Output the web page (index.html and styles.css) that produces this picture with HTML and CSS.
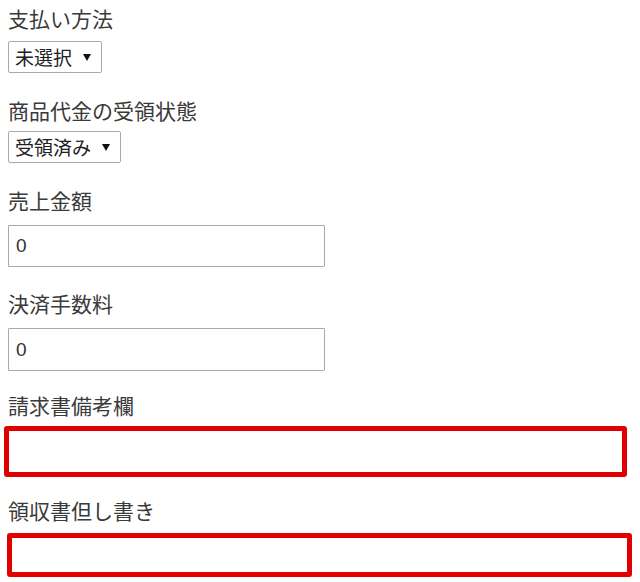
FILE: index.html
```html
<!DOCTYPE html>
<html lang="ja">
<head>
<meta charset="utf-8">
<link rel="stylesheet" href="styles.css">
</head>
<body>
<form class="form">
  <div class="field">
    <label class="label">支払い方法</label>
    <div class="select"><span class="select-text">未選択</span><svg class="arrow" width="8" height="7" viewBox="0 0 8 7"><path d="M0 0H8L4 7Z" fill="#111"/></svg></div>
  </div>
  <div class="field">
    <label class="label">商品代金の受領状態</label>
    <div class="select"><span class="select-text">受領済み</span><svg class="arrow" width="8" height="7" viewBox="0 0 8 7"><path d="M0 0H8L4 7Z" fill="#111"/></svg></div>
  </div>
  <div class="field field-input">
    <label class="label">売上金額</label>
    <input class="input" type="text" value="0">
  </div>
  <div class="field field-input">
    <label class="label">決済手数料</label>
    <input class="input input-tall" type="text" value="0">
  </div>
  <div class="field field-red1">
    <label class="label">請求書備考欄</label>
    <input class="input-red red1" type="text">
  </div>
  <div class="field field-red2">
    <label class="label">領収書但し書き</label>
    <input class="input-red red2" type="text">
  </div>
</form>
</body>
</html>
```

FILE: styles.css
```css
html, body {
  margin: 0;
  padding: 0;
  background: #fff;
}
body {
  font-family: "Noto Sans CJK JP", "Noto Sans", sans-serif;
  color: #333;
}
.form {
  display: flex;
  flex-direction: column;
  padding: 4px 0 0 0;
}
.field {
  display: flex;
  flex-direction: column;
  align-items: flex-start;
  padding-left: 8px;
}
.label {
  font-size: 21px;
  line-height: 28px;
  height: 28px;
  color: #3a3a3a;
}
.select {
  margin-top: 9px;
  margin-bottom: 23px;
  box-sizing: border-box;
  height: 32px;
  display: inline-flex;
  align-items: center;
  border: 1px solid #a9a9a9;
  border-radius: 2px;
  padding: 0 10px 0 6px;
  background: #fff;
  gap: 11px;
}
.field:nth-child(2) .select {
  margin-top: 7px;
  margin-bottom: 23px;
}
.select-text {
  font-size: 19px;
  line-height: 30px;
  color: #222;
}
.arrow {
  display: block;
  margin-top: 1px;
}
.field-input .input {
  margin-top: 11px;
  margin-bottom: 22px;
}
.input {
  box-sizing: border-box;
  width: 317px;
  height: 42px;
  border: 1px solid #a9a9a9;
  border-radius: 1px;
  padding: 0 7px;
  font-family: "Liberation Sans", Arial, sans-serif;
  font-size: 19px;
  color: #333;
  background: #fff;
  outline: none;
}
.input-tall {
  height: 43px;
  margin-bottom: 20px !important;
}
.input-red {
  box-sizing: border-box;
  border: 5px solid #e00000;
  border-radius: 3px;
  background: #fff;
  outline: none;
}
.red1 {
  margin-top: 7px;
  margin-left: -4px;
  width: 623px;
  height: 51px;
  margin-bottom: 19px;
}
.red2 {
  margin-top: 9px;
  margin-left: -1px;
  width: 625px;
  height: 44px;
}
```
